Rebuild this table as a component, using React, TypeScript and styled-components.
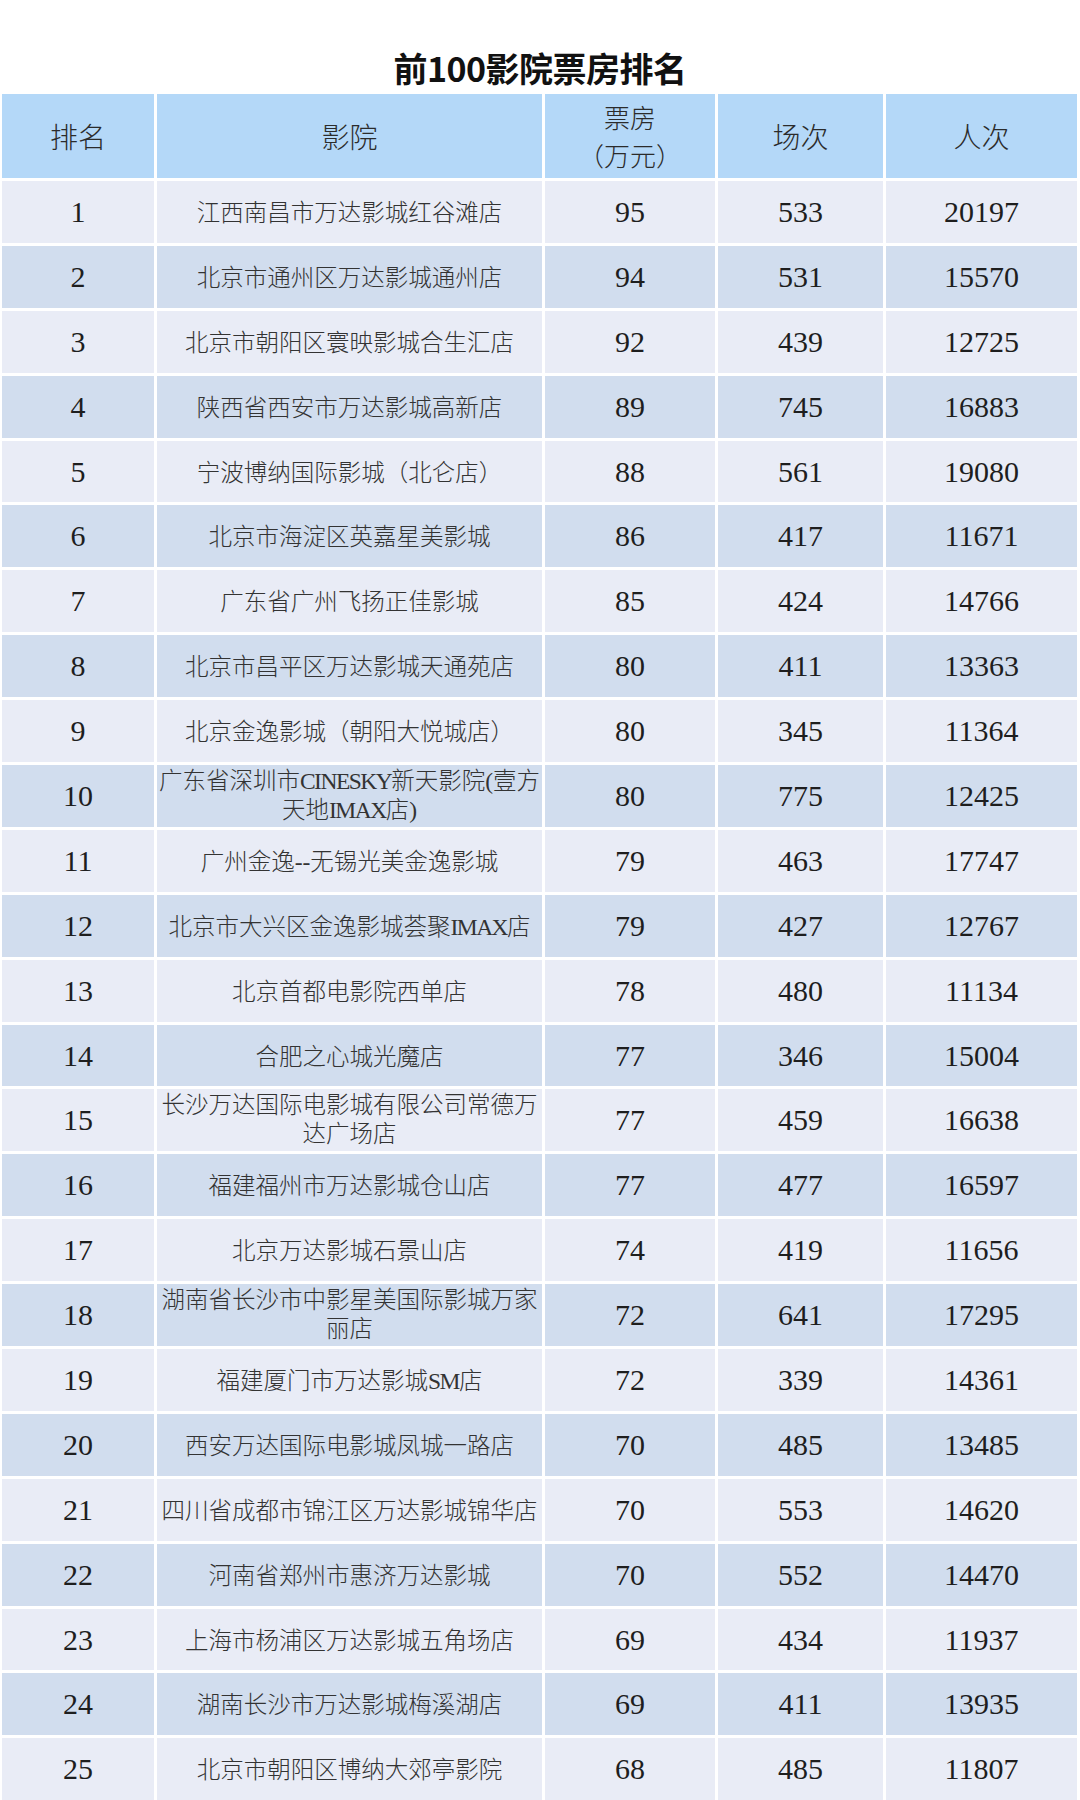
import React from "react";
import styled, { createGlobalStyle } from "styled-components";

const GlobalStyle = createGlobalStyle`
  html, body {
    margin: 0;
    padding: 0;
    background: #ffffff;
  }
  body {
    width: 1080px;
    font-family: "Noto Sans CJK SC", "Noto Sans", sans-serif;
  }
`;

const COLS = "152px 385px 170px 165px 1fr";

const Page = styled.div`
  width: 1080px;
  height: 1800px;
  overflow: hidden;
  background: #ffffff;
`;

const Title = styled.h1`
  margin: 0;
  height: 94px;
  display: flex;
  align-items: flex-end;
  justify-content: center;
  padding-bottom: 6px;
  box-sizing: border-box;
  font-family: "Noto Sans CJK SC", sans-serif;
  font-weight: 700;
  font-size: 34px;
  line-height: 41px;
  color: #111111;
  letter-spacing: -0.5px;
`;

const Table = styled.div`
  display: flex;
  flex-direction: column;
  gap: 3px;
  padding: 0 3px 0 2px;
`;

const HeaderRow = styled.div`
  display: grid;
  grid-template-columns: ${COLS};
  column-gap: 3px;
  height: 84px;
`;

const HeaderCell = styled.div`
  background: #b4d8f8;
  display: flex;
  flex-direction: column;
  align-items: center;
  justify-content: center;
  font-family: "Noto Sans CJK SC", sans-serif;
  font-weight: 300;
  font-size: 28px;
  line-height: 35px;
  color: #2b2b2b;
`;

const HeaderLine = styled.span`
  display: block;
  font-size: 26px;
  height: 38px;
  line-height: 38px;
  overflow: visible;
`;

const Row = styled.div`
  display: grid;
  grid-template-columns: ${COLS};
  column-gap: 3px;
  height: 61.9px;
`;

const Cell = styled.div<{ $tone: "light" | "dark"; $shift?: boolean }>`
  background: ${(p) => (p.$tone === "light" ? "#e9ecf6" : "#d1ddee")};
  display: flex;
  flex-direction: column;
  align-items: center;
  justify-content: center;
  padding-top: ${(p) => (p.$shift ? "3px" : "0")};
  box-sizing: border-box;
  overflow: visible;
`;

const NumText = styled.span`
  font-family: "Liberation Serif", serif;
  font-size: 30px;
  line-height: 1;
  color: #1e1e1e;
`;

const NameLine = styled.span`
  font-family: "Liberation Serif", "Noto Sans CJK SC", serif;
  font-size: 23.5px;
  line-height: 29px;
  color: #333333;
  white-space: nowrap;
  font-weight: 300;
`;

const Latin = styled.span`
  font-family: "Liberation Serif", serif;
  font-weight: 400;
  letter-spacing: -1.5px;
`;

type Item = {
  rank: number;
  name: string[];
  box: number;
  shows: number;
  people: number;
};

const data: Item[] = [
  { rank: 1, name: ["江西南昌市万达影城红谷滩店"], box: 95, shows: 533, people: 20197 },
  { rank: 2, name: ["北京市通州区万达影城通州店"], box: 94, shows: 531, people: 15570 },
  { rank: 3, name: ["北京市朝阳区寰映影城合生汇店"], box: 92, shows: 439, people: 12725 },
  { rank: 4, name: ["陕西省西安市万达影城高新店"], box: 89, shows: 745, people: 16883 },
  { rank: 5, name: ["宁波博纳国际影城（北仑店）"], box: 88, shows: 561, people: 19080 },
  { rank: 6, name: ["北京市海淀区英嘉星美影城"], box: 86, shows: 417, people: 11671 },
  { rank: 7, name: ["广东省广州飞扬正佳影城"], box: 85, shows: 424, people: 14766 },
  { rank: 8, name: ["北京市昌平区万达影城天通苑店"], box: 80, shows: 411, people: 13363 },
  { rank: 9, name: ["北京金逸影城（朝阳大悦城店）"], box: 80, shows: 345, people: 11364 },
  { rank: 10, name: ["广东省深圳市CINESKY新天影院(壹方", "天地IMAX店)"], box: 80, shows: 775, people: 12425 },
  { rank: 11, name: ["广州金逸--无锡光美金逸影城"], box: 79, shows: 463, people: 17747 },
  { rank: 12, name: ["北京市大兴区金逸影城荟聚IMAX店"], box: 79, shows: 427, people: 12767 },
  { rank: 13, name: ["北京首都电影院西单店"], box: 78, shows: 480, people: 11134 },
  { rank: 14, name: ["合肥之心城光魔店"], box: 77, shows: 346, people: 15004 },
  { rank: 15, name: ["长沙万达国际电影城有限公司常德万", "达广场店"], box: 77, shows: 459, people: 16638 },
  { rank: 16, name: ["福建福州市万达影城仓山店"], box: 77, shows: 477, people: 16597 },
  { rank: 17, name: ["北京万达影城石景山店"], box: 74, shows: 419, people: 11656 },
  { rank: 18, name: ["湖南省长沙市中影星美国际影城万家", "丽店"], box: 72, shows: 641, people: 17295 },
  { rank: 19, name: ["福建厦门市万达影城SM店"], box: 72, shows: 339, people: 14361 },
  { rank: 20, name: ["西安万达国际电影城凤城一路店"], box: 70, shows: 485, people: 13485 },
  { rank: 21, name: ["四川省成都市锦江区万达影城锦华店"], box: 70, shows: 553, people: 14620 },
  { rank: 22, name: ["河南省郑州市惠济万达影城"], box: 70, shows: 552, people: 14470 },
  { rank: 23, name: ["上海市杨浦区万达影城五角场店"], box: 69, shows: 434, people: 11937 },
  { rank: 24, name: ["湖南长沙市万达影城梅溪湖店"], box: 69, shows: 411, people: 13935 },
  { rank: 25, name: ["北京市朝阳区博纳大郊亭影院"], box: 68, shows: 485, people: 11807 },
];

function renderLine(line: string) {
  const parts = line.split(/([A-Za-z]+)/);
  return parts.map((part, i) =>
    /^[A-Za-z]+$/.test(part) ? <Latin key={i}>{part}</Latin> : <React.Fragment key={i}>{part}</React.Fragment>
  );
}

export default function App() {
  return (
    <Page>
      <GlobalStyle />
      <Title>前100影院票房排名</Title>
      <Table>
        <HeaderRow>
          <HeaderCell>排名</HeaderCell>
          <HeaderCell>影院</HeaderCell>
          <HeaderCell>
            <HeaderLine>票房</HeaderLine>
            <HeaderLine>（万元）</HeaderLine>
          </HeaderCell>
          <HeaderCell>场次</HeaderCell>
          <HeaderCell>人次</HeaderCell>
        </HeaderRow>
        {data.map((d, idx) => {
          const tone = idx % 2 === 0 ? "light" : "dark";
          return (
            <Row key={d.rank}>
              <Cell $tone={tone}>
                <NumText>{d.rank}</NumText>
              </Cell>
              <Cell $tone={tone} $shift={d.name.length === 1}>
                {d.name.map((line, i) => (
                  <NameLine key={i}>{renderLine(line)}</NameLine>
                ))}
              </Cell>
              <Cell $tone={tone}>
                <NumText>{d.box}</NumText>
              </Cell>
              <Cell $tone={tone}>
                <NumText>{d.shows}</NumText>
              </Cell>
              <Cell $tone={tone}>
                <NumText>{d.people}</NumText>
              </Cell>
            </Row>
          );
        })}
      </Table>
    </Page>
  );
}
